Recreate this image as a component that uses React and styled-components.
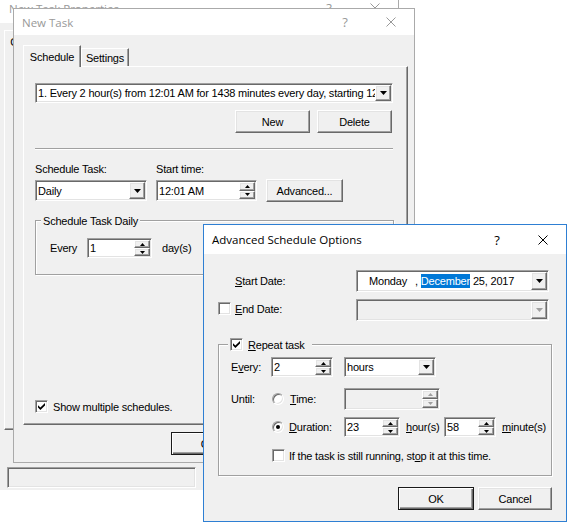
import React from 'react';
import styled, { createGlobalStyle, css } from 'styled-components';

const GlobalStyle = createGlobalStyle`
  html, body { margin: 0; padding: 0; background: #fff; }
  body {
    font-family: "Liberation Sans", Arial, sans-serif;
    font-size: 11px;
    color: #000;
    letter-spacing: -0.2px;
  }
  * { box-sizing: border-box; }
`;

const sunken = css`
  border: 1px solid;
  border-color: #a0a0a0 #fff #fff #a0a0a0;
  box-shadow: inset 1px 1px #696969, inset -1px -1px #e3e3e3;
`;

const raised = css`
  border: 1px solid;
  border-color: #fff #696969 #696969 #fff;
  box-shadow: inset -1px -1px #a0a0a0, inset 1px 1px #e3e3e3;
  background: #f0f0f0;
`;

const Desktop = styled.div`
  position: relative;
  width: 570px;
  height: 524px;
  overflow: hidden;
  background: #fff;
`;

const Window = styled.div`
  position: absolute;
  z-index: ${p => p.$z};
  left: ${p => p.$x}px;
  top: ${p => p.$y}px;
  width: ${p => p.$w}px;
  height: ${p => p.$h}px;
  border: 1px solid ${p => p.$border};
  ${p => p.$openBottom && css`border-bottom-color: transparent;`}
  background: #f0f0f0;
  display: flex;
  flex-direction: column;
`;

const TitleBar = styled.div`
  height: ${p => p.$h}px;
  flex: none;
  background: #fff;
  display: flex;
  align-items: center;
  padding-left: ${p => p.$pl}px;
  font-family: "Open Sans", "Noto Sans", sans-serif;
  font-size: 11.5px;
  letter-spacing: 0;
  color: ${p => (p.$active ? '#000' : '#999')};
`;

const TitleText = styled.div`
  flex: 1;
  white-space: nowrap;
`;

const CaptionButtons = styled.div`
  display: flex;
  align-items: center;
  align-self: stretch;
`;

const CaptionButton = styled.div`
  width: 46px;
  display: flex;
  align-items: center;
  justify-content: center;
  font-size: 13px;
`;

const Body = styled.div`
  flex: 1;
  display: flex;
  flex-direction: column;
  padding: ${p => p.$pad};
  min-height: 0;
`;

const TabStrip = styled.div`
  display: flex;
  align-items: flex-end;
  height: 21px;
  position: relative;
  z-index: 1;
  flex: none;
`;

const Tab = styled.div`
  width: ${p => p.$w}px;
  height: ${p => (p.$active ? 22 : 18)}px;
  margin-bottom: ${p => (p.$active ? -1 : 0)}px;
  background: #f0f0f0;
  border-top: 1px solid #fff;
  border-left: 1px solid #fff;
  border-right: 1px solid #696969;
  box-shadow: inset -1px 0 #a0a0a0;
  display: flex;
  align-items: center;
  justify-content: center;
  white-space: nowrap;
  flex: none;
`;

const TabPanel = styled.div`
  width: ${p => p.$w}px;
  height: ${p => p.$h}px;
  flex: none;
  border: 1px solid;
  border-color: #fff #696969 #696969 #fff;
  box-shadow: inset -1px -1px #a0a0a0;
  padding: ${p => p.$pad || '0'};
  display: flex;
  flex-direction: column;
`;

const Field = styled.div`
  ${sunken}
  padding: 1px;
  width: ${p => p.$w}px;
  height: ${p => p.$h || 20}px;
  margin-left: ${p => p.$ml || 0}px;
  margin-top: ${p => p.$mt || 0}px;
  flex: none;
  background: ${p => (p.$disabled ? '#f0f0f0' : '#fff')};
  display: flex;
  align-items: stretch;
`;

const FieldText = styled.div`
  flex: 1;
  min-width: 0;
  display: flex;
  align-items: center;
  padding-left: ${p => p.$pl ?? 1}px;
  white-space: nowrap;
  overflow: hidden;
`;

const SpinBox = styled.div`
  width: 16px;
  flex: none;
  display: flex;
  flex-direction: column;
`;

const SpinButton = styled.div`
  ${raised}
  flex: 1;
  display: flex;
  align-items: center;
  justify-content: center;
`;

const DropButton = styled.div`
  ${raised}
  width: 16px;
  flex: none;
  display: flex;
  align-items: center;
  justify-content: center;
`;

const PushButton = styled.button`
  ${raised}
  font: inherit;
  letter-spacing: inherit;
  color: #000;
  margin: 0;
  padding: 0;
  width: ${p => p.$w}px;
  height: 23px;
  flex: none;
  margin-left: ${p => p.$ml || 0}px;
  display: flex;
  align-items: center;
  justify-content: center;
  ${p =>
    p.$default &&
    css`
      border-color: #1a1a1a;
      box-shadow: inset 1px 1px #fff, inset -1px -1px #696969, inset -2px -2px #a0a0a0;
    `}
`;

const ButtonRow = styled.div`
  display: flex;
  justify-content: flex-end;
  width: ${p => (p.$w ? `${p.$w}px` : 'auto')};
  margin-top: ${p => p.$mt || 0}px;
  padding-right: ${p => p.$pr || 0}px;
  gap: ${p => p.$gap}px;
  flex: none;
`;

const Separator = styled.div`
  height: 2px;
  width: ${p => p.$w}px;
  margin-top: ${p => p.$mt}px;
  border-top: 1px solid #a0a0a0;
  border-bottom: 1px solid #fff;
  flex: none;
`;

const Row = styled.div`
  display: flex;
  align-items: center;
  height: ${p => p.$h}px;
  margin-top: ${p => p.$mt || 0}px;
  padding-left: ${p => p.$pl || 0}px;
  flex: none;
`;

const Label = styled.span`
  width: ${p => (p.$w ? `${p.$w}px` : 'auto')};
  margin-left: ${p => p.$ml || 0}px;
  margin-top: ${p => p.$dy || 0}px;
  flex: none;
  white-space: nowrap;
`;

const U = styled.span`
  text-decoration: underline;
  text-underline-offset: 1px;
`;

const CheckBoxBox = styled.span`
  ${sunken}
  width: 13px;
  height: 13px;
  background: #fff;
  display: inline-flex;
  align-items: center;
  justify-content: center;
  flex: none;
  margin-top: ${p => p.$dy || 0}px;
`;

const RadioCircle = styled.span`
  width: 12px;
  height: 12px;
  border-radius: 50%;
  flex: none;
  border: 1px solid;
  border-color: #a0a0a0 #fff #fff #a0a0a0;
  box-shadow: inset 1px 1px #696969, inset -1px -1px #e3e3e3;
  background: #fff;
  display: inline-flex;
  align-items: center;
  justify-content: center;
  &::after {
    content: '';
    width: 4px;
    height: 4px;
    border-radius: 50%;
    background: #000;
    display: ${p => (p.$checked ? 'block' : 'none')};
  }
`;

const Spacer = styled.span`
  width: ${p => p.$w}px;
  flex: none;
`;

const GroupBox = styled.div`
  position: relative;
  width: ${p => p.$w}px;
  height: ${p => p.$h}px;
  flex: none;
  margin-top: ${p => p.$mt || 0}px;
  margin-left: ${p => p.$ml || 0}px;
  border: 1px solid #a0a0a0;
  box-shadow: inset 1px 1px #fff, 1px 1px #fff;
  padding: ${p => p.$pad};
  display: flex;
  flex-direction: column;
`;

const GroupLegend = styled.div`
  position: absolute;
  left: ${p => p.$x}px;
  top: -7px;
  height: 13px;
  background: #f0f0f0;
  padding: ${p => p.$pad || '0 2px'};
  display: flex;
  align-items: center;
  gap: ${p => p.$gap || 0}px;
  white-space: nowrap;
`;

const DateSeg = styled.span`
  margin-left: ${p => p.$ml || 0}px;
  white-space: nowrap;
  ${p =>
    p.$selected &&
    css`
      background: #0078d7;
      color: #fff;
      padding: 1px 0;
    `}
`;

const StatusBox = styled.div`
  ${sunken}
  width: ${p => p.$w}px;
  height: ${p => p.$h}px;
  margin-top: ${p => p.$mt}px;
  margin-left: ${p => p.$ml}px;
  flex: none;
`;

/* ---------- drawings ---------- */

const DownArrow = ({ color = '#000' }) => (
  <svg width="7" height="4" viewBox="0 0 7 4">
    <polygon points="0,0 7,0 3.5,4" fill={color} />
  </svg>
);

const SmallArrow = ({ up, color = '#000' }) => (
  <svg width="5" height="3" viewBox="0 0 5 3">
    <polygon points={up ? '0,3 5,3 2.5,0' : '0,0 5,0 2.5,3'} fill={color} />
  </svg>
);

const CloseGlyph = ({ color }) => (
  <svg width="10" height="10" viewBox="0 0 10 10">
    <path d="M0.5 0.5 L9.5 9.5 M9.5 0.5 L0.5 9.5" stroke={color} strokeWidth="1" fill="none" />
  </svg>
);

const CheckGlyph = () => (
  <svg width="7" height="7" viewBox="0 0 7 7">
    <polygon points="0,2.2 2.4,4.4 7,0 7,2.4 2.4,7 0,4.6" fill="#000" />
  </svg>
);

/* ---------- composite controls ---------- */

const Captions = ({ active }) => (
  <CaptionButtons>
    <CaptionButton>?</CaptionButton>
    <CaptionButton>
      <CloseGlyph color={active ? '#000' : '#999'} />
    </CaptionButton>
  </CaptionButtons>
);

const Spinner = ({ disabled }) => (
  <SpinBox>
    <SpinButton>
      <SmallArrow up color={disabled ? '#a0a0a0' : '#000'} />
    </SpinButton>
    <SpinButton>
      <SmallArrow color={disabled ? '#a0a0a0' : '#000'} />
    </SpinButton>
  </SpinBox>
);

const SpinEdit = ({ w, h = 20, value = '', disabled, ml }) => (
  <Field $w={w} $h={h} $disabled={disabled} $ml={ml}>
    <FieldText>{value}</FieldText>
    <Spinner disabled={disabled} />
  </Field>
);

const ComboBox = ({ w, h = 20, value, ml, disabled }) => (
  <Field $w={w} $h={h} $ml={ml} $disabled={disabled}>
    <FieldText>{value}</FieldText>
    <DropButton>
      <DownArrow color={disabled ? '#a0a0a0' : '#000'} />
    </DropButton>
  </Field>
);

const CheckBox = ({ checked, dy }) => (
  <CheckBoxBox $dy={dy}>{checked && <CheckGlyph />}</CheckBoxBox>
);

export default function App() {
  return (
    <>
      <GlobalStyle />
      <Desktop>
        {/* Back window: New Task Properties */}
        <Window $z={1} $x={-1} $y={-8} $w={400} $h={498} $border="#aaaaaa" $openBottom>
          <TitleBar $h={30} $pl={9}>
            <TitleText>New Task Properties</TitleText>
            <Captions />
          </TitleBar>
          <Body $pad="7px 0 0 4px">
            <TabStrip>
              <Tab $active $w={50}>General</Tab>
              <Tab $w={56}>Schedule</Tab>
              <Tab $w={50}>Settings</Tab>
            </TabStrip>
            <TabPanel $w={390} $h={379} />
            <StatusBox $w={189} $h={21} $mt={37} $ml={3} />
          </Body>
        </Window>

        {/* New Task window */}
        <Window $z={2} $x={13} $y={8} $w={402} $h={455} $border="#aaaaaa">
          <TitleBar $h={26} $pl={8}>
            <TitleText>New Task</TitleText>
            <Captions />
          </TitleBar>
          <Body $pad="10px 0 0 9px">
            <TabStrip>
              <Tab $active $w={58}>Schedule</Tab>
              <Tab $w={48}>Settings</Tab>
            </TabStrip>
            <TabPanel $w={385} $h={359} $pad="16px 0 0 11px">
              <ComboBox
                w={358}
                h={20}
                value="1. Every 2 hour(s) from 12:01 AM for 1438 minutes every day, starting 12/25/2017"
              />
              <ButtonRow $mt={7} $w={358} $pr={1} $gap={7}>
                <PushButton $w={75}>New</PushButton>
                <PushButton $w={75}>Delete</PushButton>
              </ButtonRow>
              <Separator $mt={15} $w={358} />
              <Row $mt={12} $h={13}>
                <Label $w={121}>Schedule Task:</Label>
                <Label>Start time:</Label>
              </Row>
              <Row $mt={4} $h={23}>
                <ComboBox w={112} h={21} value="Daily" />
                <SpinEdit w={101} h={21} value="12:01 AM" ml={9} />
                <PushButton $w={77} $ml={9}>Advanced...</PushButton>
              </Row>
              <GroupBox $mt={18} $w={359} $h={55} $pad="17px 0 0 14px">
                <GroupLegend $x={5}>Schedule Task Daily</GroupLegend>
                <Row $h={20}>
                  <Label $w={37}>Every</Label>
                  <SpinEdit w={65} value="1" />
                  <Label $ml={10}>day(s)</Label>
                </Row>
              </GroupBox>
              <Row $mt={125} $h={13}>
                <CheckBox checked />
                <Label $ml={5}>Show multiple schedules.</Label>
              </Row>
            </TabPanel>
            <ButtonRow $mt={7} $w={385} $gap={6}>
              <PushButton $w={75} $default>OK</PushButton>
              <PushButton $w={75}>Cancel</PushButton>
              <PushButton $w={75}>Apply</PushButton>
            </ButtonRow>
          </Body>
        </Window>

        {/* Advanced Schedule Options dialog */}
        <Window $z={3} $x={203} $y={224} $w={364} $h={298} $border="#2e7fd3">
          <TitleBar $h={29} $pl={8} $active>
            <TitleText>Advanced Schedule Options</TitleText>
            <Captions active />
          </TitleBar>
          <Body $pad="16px 0 0 0">
            <Row $h={22} $pl={31}>
              <Label $w={121}>
                <U>S</U>tart Date:
              </Label>
              <Field $w={193} $h={22}>
                <FieldText $pl={11}>
                  <DateSeg>Monday</DateSeg>
                  <DateSeg $ml={8}>,</DateSeg>
                  <DateSeg $ml={3} $selected>December</DateSeg>
                  <DateSeg $ml={3}>25, 2017</DateSeg>
                </FieldText>
                <DropButton>
                  <DownArrow />
                </DropButton>
              </Field>
            </Row>
            <Row $mt={7} $h={22} $pl={14}>
              <CheckBox dy={-3} />
              <Label $ml={4} $w={121} $dy={-3}>
                <U>E</U>nd Date:
              </Label>
              <ComboBox w={193} h={22} disabled />
            </Row>
            <GroupBox $mt={23} $ml={14} $w={334} $h={132} $pad="12px 0 0 12px">
              <GroupLegend $x={9} $pad="0 7px 0 2px" $gap={5}>
                <CheckBox checked />
                <span>
                  <U>R</U>epeat task
                </span>
              </GroupLegend>
              <Row $h={20}>
                <Label $w={40}>
                  E<U>v</U>ery:
                </Label>
                <SpinEdit w={62} value="2" />
                <ComboBox w={92} value="hours" ml={11} />
              </Row>
              <Row $mt={11} $h={22}>
                <Label $w={41}>Until:</Label>
                <RadioCircle />
                <Label $ml={6} $w={54}>
                  <U>T</U>ime:
                </Label>
                <SpinEdit w={96} h={22} disabled />
              </Row>
              <Row $mt={7} $h={20}>
                <Spacer $w={41} />
                <RadioCircle $checked />
                <Label $ml={5} $w={55}>
                  <U>D</U>uration:
                </Label>
                <SpinEdit w={56} value="23" />
                <Label $ml={6} $w={38}>
                  <U>h</U>our(s)
                </Label>
                <SpinEdit w={52} value="58" />
                <Label $ml={6}>
                  <U>m</U>inute(s)
                </Label>
              </Row>
              <Row $mt={12} $h={13}>
                <Spacer $w={41} />
                <CheckBox />
                <Label $ml={4}>
                  If the task is still running, st<U>o</U>p it at this time.
                </Label>
              </Row>
            </GroupBox>
            <ButtonRow $mt={11} $pr={14} $gap={4}>
              <PushButton $w={76} $default>OK</PushButton>
              <PushButton $w={74}>Cancel</PushButton>
            </ButtonRow>
          </Body>
        </Window>
      </Desktop>
    </>
  );
}
